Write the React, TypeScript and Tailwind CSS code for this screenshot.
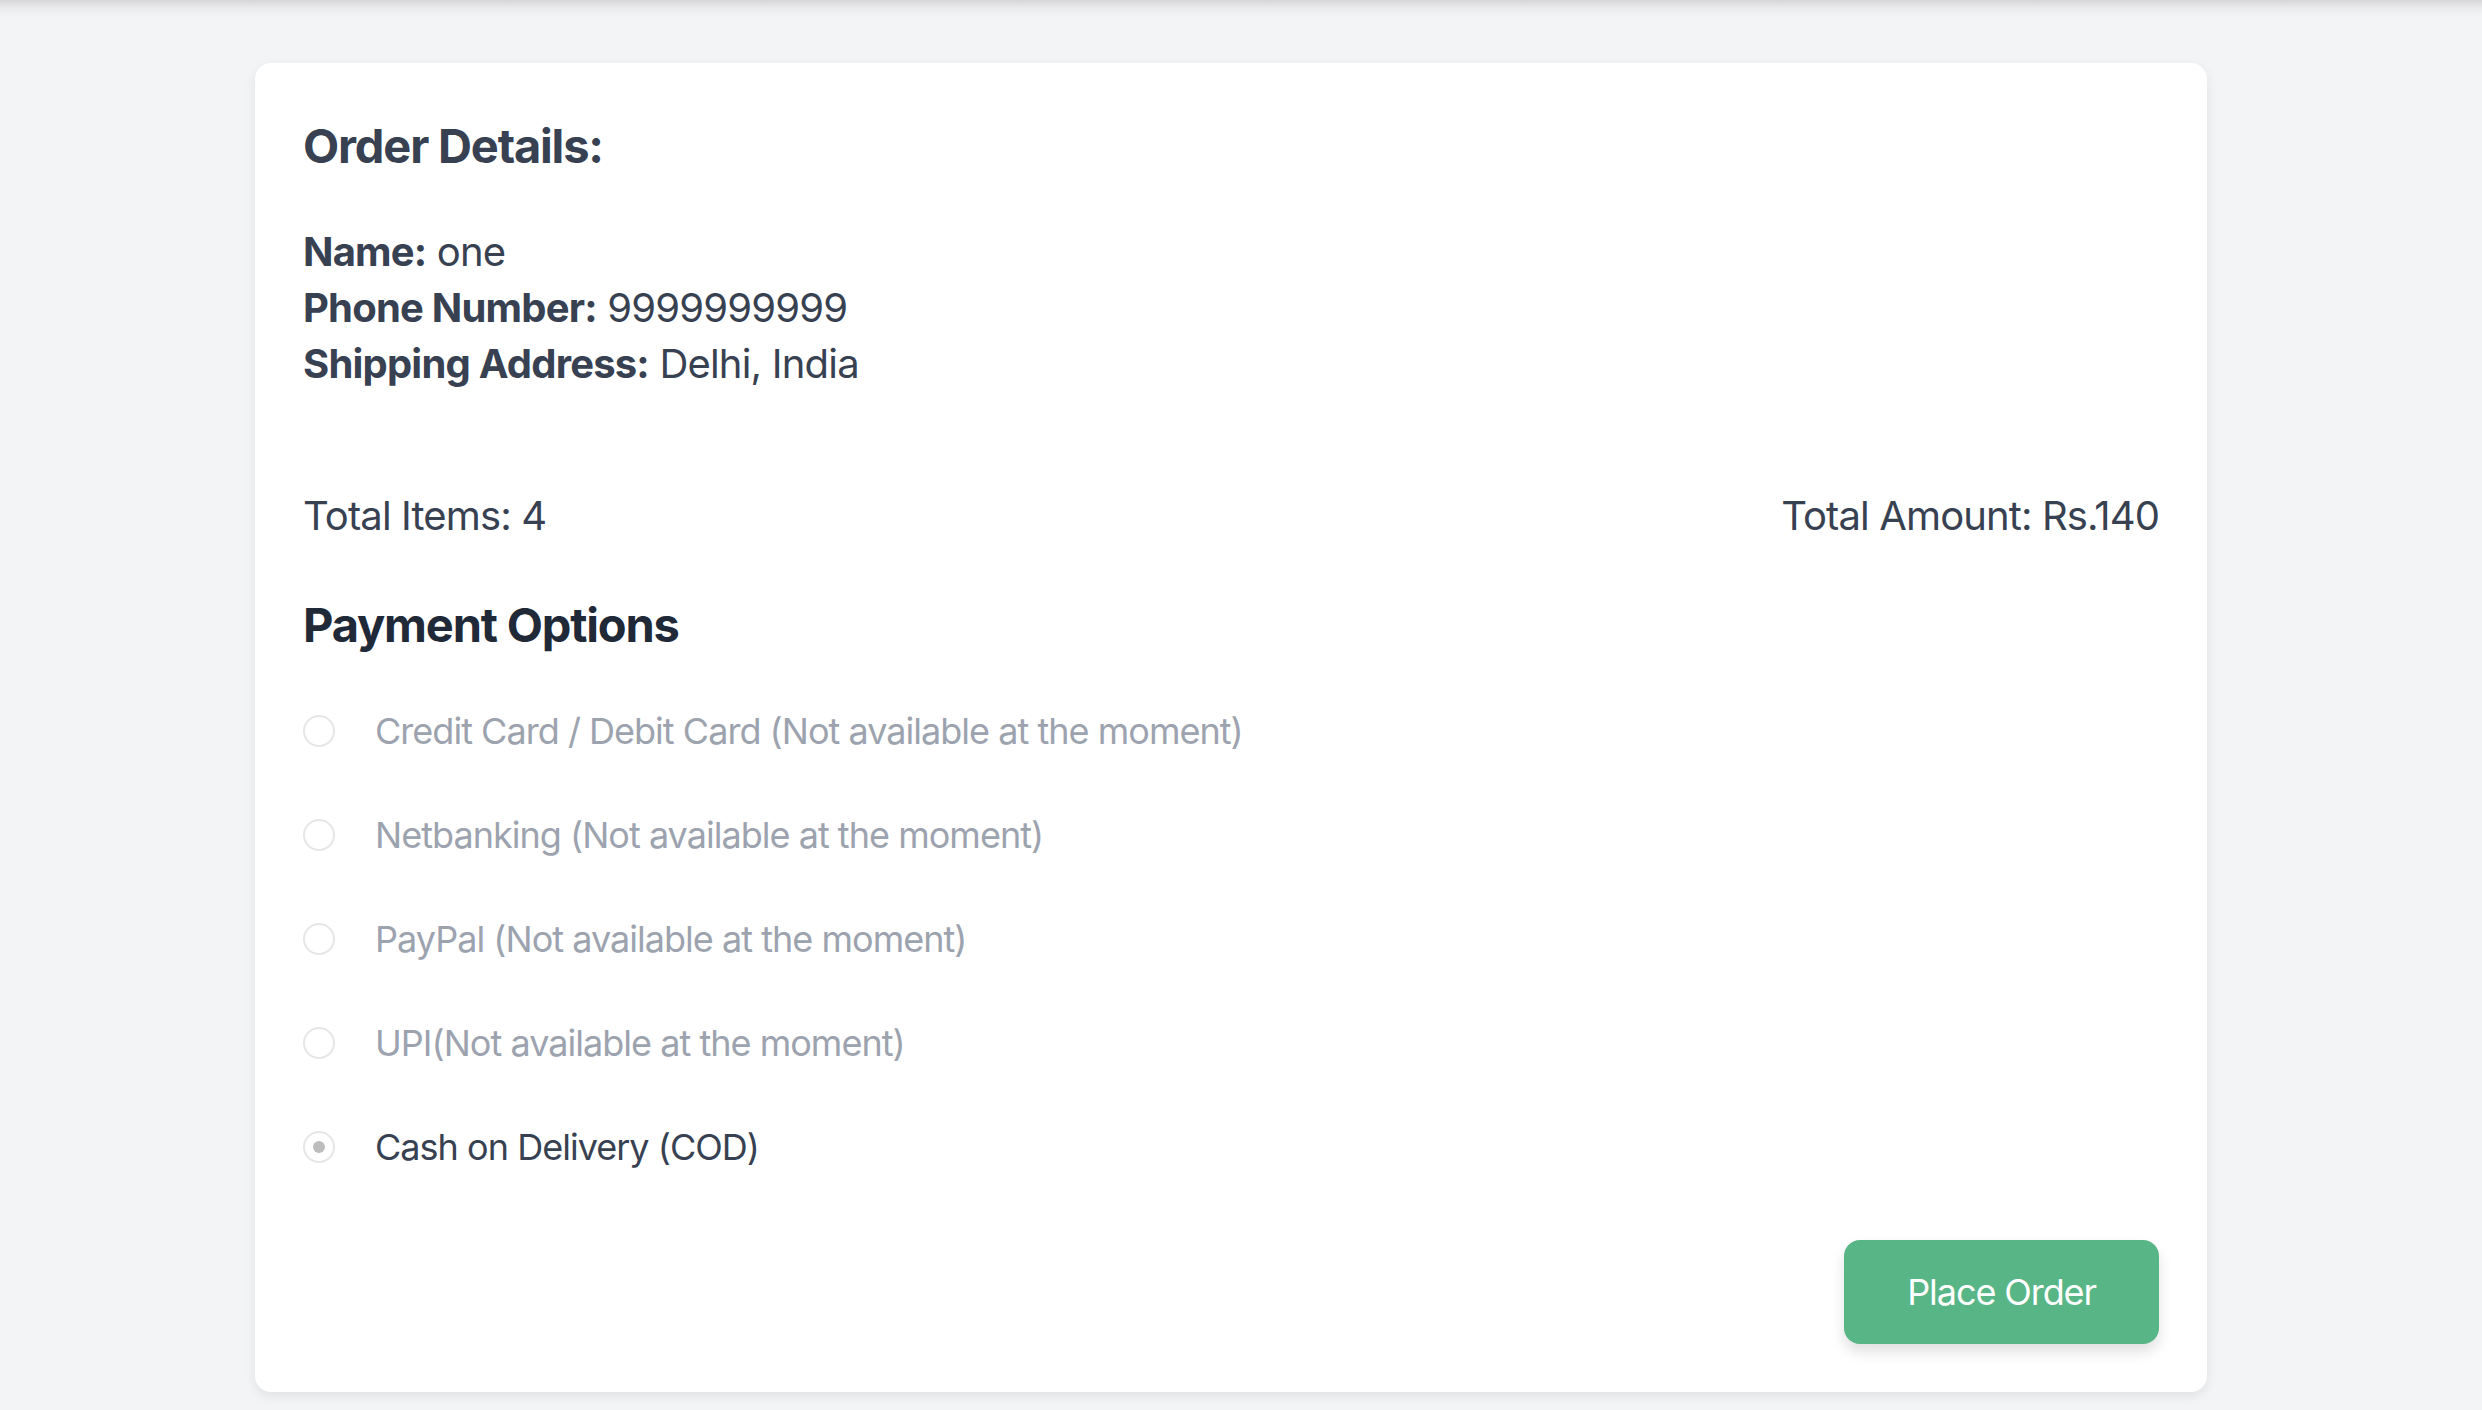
import React from "react";

const options = [
  { label: "Credit Card / Debit Card (Not available at the moment)", disabled: true },
  { label: "Netbanking (Not available at the moment)", disabled: true },
  { label: "PayPal (Not available at the moment)", disabled: true },
  { label: "UPI(Not available at the moment)", disabled: true },
  { label: "Cash on Delivery (COD)", disabled: false, checked: true },
];

export default function App() {
  return (
    <div
      className="min-h-screen w-full bg-[#f3f4f6]"
      style={{ fontFamily: "Inter, 'Noto Sans', sans-serif" }}
    >
      <div className="h-[16px] w-full bg-gradient-to-b from-[#d6d6d8] via-[#ebebed] to-[#f3f4f6]" />
      <div className="ml-[255px] mt-[47px] w-[1952px] rounded-[16px] bg-white px-[48px] pb-[48px] pt-[51px] shadow-[0_4px_12px_rgba(0,0,0,0.08)]">
        <h2 className="text-[47px] font-bold leading-[64px] tracking-[-0.025em] text-[#374151]">Order Details:</h2>
        <div className="mt-[46px] text-[40px] leading-[56px] text-[#374151] tracking-[-0.02em]">
          <p>
            <span className="font-bold">Name:</span> one
          </p>
          <p>
            <span className="font-bold">Phone Number:</span> 9999999999
          </p>
          <p>
            <span className="font-bold">Shipping Address:</span> Delhi, India
          </p>
        </div>
        <div className="mt-[96px] flex items-center justify-between text-[40px] leading-[56px] text-[#374151] tracking-[-0.022em]">
          <span>Total Items: 4</span>
          <span>Total Amount: Rs.140</span>
        </div>
        <h3 className="mt-[49px] text-[47px] font-bold leading-[64px] tracking-[-0.025em] text-[#1f2937]">Payment Options</h3>
        <div className="mt-[46px] flex flex-col gap-[48px]">
          {options.map((o) => (
            <label key={o.label} className="flex items-center">
              <span className="flex h-[32px] w-[32px] shrink-0 items-center justify-center rounded-full border-[2px] border-[#e6e6e6] bg-white">
                {o.checked ? <span className="h-[12px] w-[12px] rounded-full bg-[#bdbdbd]" /> : null}
              </span>
              <span
                className={
                  "ml-[40px] text-[36px] leading-[56px] tracking-[-0.027em] " +
                  (o.disabled ? "text-[#9ca3af]" : "text-[#374151]")
                }
              >
                {o.label}
              </span>
            </label>
          ))}
        </div>
        <div className="mt-[65px] flex justify-end">
          <button className="rounded-[16px] bg-[#57b586] px-[63px] py-[24px] text-[36px] leading-[56px] tracking-[-0.03em] text-white shadow-[0_8px_14px_rgba(0,0,0,0.12)]">
            Place Order
          </button>
        </div>
      </div>
    </div>
  );
}
